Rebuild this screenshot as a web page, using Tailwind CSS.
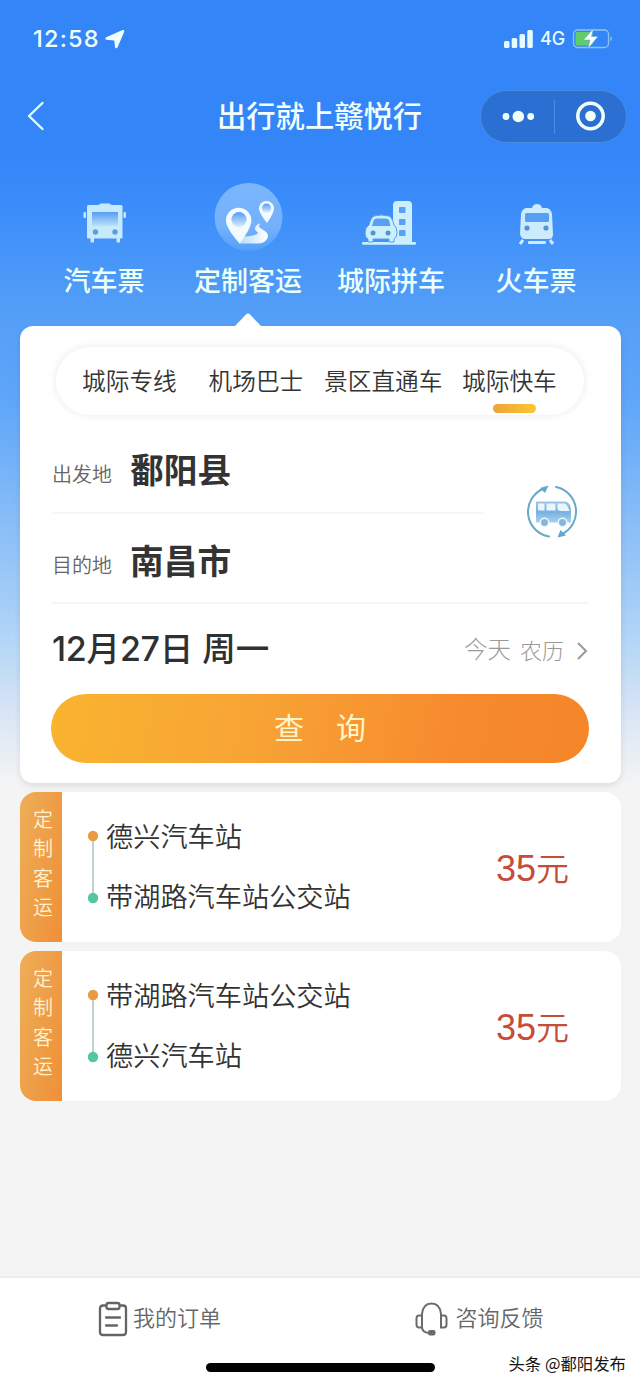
<!DOCTYPE html>
<html lang="zh-CN">
<head>
<meta charset="utf-8">
<title>出行就上赣悦行</title>
<script src="https://cdn.jsdelivr.net/npm/@tailwindcss/browser@4"></script>
</head>
<body class="w-[640px] h-[1386px] overflow-hidden bg-[#f4f4f4] font-['Noto_Sans_CJK_SC',sans-serif] text-[#333]">
<div class="flex h-[1386px] flex-col bg-[linear-gradient(180deg,#3485f7_0px,#3485f7_150px,#3a8cfa_200px,#559ff7_320px,#5fa6f9_400px,#7ab5f8_480px,#a3cdf7_600px,#bcdaf6_660px,#dce7f5_720px,#f4f4f4_785px)]">

  <!-- Status bar -->
  <div class="flex h-[77px] shrink-0 items-center justify-between pl-[33px] pr-[26px]">
    <div class="flex items-center gap-[5px] pt-px text-[#f0fffc]">
      <span class="w-[67px] whitespace-nowrap font-['Inter'] text-[23.500px] font-medium leading-none tracking-[1.200px]">12:58</span>
      <svg class="h-[20px] w-[20px]" viewBox="0 0 20 20" fill="currentColor"><path d="M17.600 1 1.200 8.300Q-.3 9.600 1.300 10.800l8 .7.8 7.100q1.200 1.600 2.400 0L19.200 2.800Q19.600.4 17.600 1Z"/></svg>
    </div>
    <div class="flex items-center text-[#e6fbff]">
      <svg class="h-[18px] w-[29px]" viewBox="0 0 29 18" fill="currentColor"><rect y="11" width="5.500" height="7" rx="1.500"/><rect x="7.700" y="8" width="5.500" height="10" rx="1.500"/><rect x="15.500" y="4" width="5.500" height="14" rx="1.500"/><rect x="23.300" width="5.500" height="18" rx="1.500"/></svg>
      <span class="ml-[7px] w-[26px] pt-px font-['Inter'] text-[18px] font-medium leading-none">4G</span>
      <svg class="ml-[6px] h-[22px] w-[42px]" viewBox="0 0 42 22"><rect x="1.500" y="2" width="35" height="17.500" rx="4" fill="none" stroke="#8bc4ef" stroke-width="1.300"/><rect x="3.500" y="4" width="17" height="13.500" rx="2" fill="#62cd68"/><path d="M38.500 8q3 2.500 0 5.500Z" fill="#8bc4ef"/><path d="M21.500 .5 11.500 12h6.500L16 20.500 26 8.500h-6.500Z" fill="#fff" stroke="#62a9d5" stroke-width=".6"/></svg>
    </div>
  </div>

  <!-- Navigation bar -->
  <div class="flex h-[78px] shrink-0 items-center pl-[26px] pr-[13px]">
    <svg class="h-[30px] w-[20px]" viewBox="0 0 20 30" fill="none" stroke="#dcfffa" stroke-width="2.400" stroke-linecap="round" stroke-linejoin="round"><path d="M16.500 2 3 15l13.500 13"/></svg>
    <h1 class="ml-[171px] w-[205px] whitespace-nowrap pb-[2px] text-[29.300px] font-medium leading-none text-[#f3fffa]">出行就上赣悦行</h1>
    <div class="ml-auto flex h-[53px] w-[147px] items-center rounded-full border border-[#4a8de3] bg-[#2a6fd1]">
      <svg class="h-[51px] w-full" viewBox="0 0 145 51" fill="#f0fffc"><circle cx="25" cy="25.500" r="3.400"/><circle cx="37.300" cy="25.500" r="5.800"/><circle cx="49.700" cy="25.500" r="3.400"/><path d="M73.500 9v34" stroke="#4b8ce2" stroke-width="1.200"/><circle cx="109.500" cy="25" r="12.700" fill="none" stroke="#f0fffc" stroke-width="3.500"/><circle cx="109.500" cy="25" r="5.300"/></svg>
    </div>
  </div>

  <!-- Service menu -->
  <div class="grid h-[171px] shrink-0 grid-cols-4 px-8 pt-[25px] text-[27px] font-medium leading-[40px] text-[#edfff9]">
    <div class="flex flex-col items-center">
      <svg class="h-[80px] w-[80px]" viewBox="0 0 80 80" fill="#c6eafb">
        <defs><linearGradient id="win" x1="0" y1="0" x2="0" y2="1"><stop offset="0" stop-color="#579ef1"/><stop offset="1" stop-color="#badffa"/></linearGradient></defs>
        <path d="M35 25q0-1.500 2-1.500h8q2 0 2 1.500h10q1.500 0 1.500 1.500v31q0 1-1 1h-1.500v4H52.500v-4H30v4h-3.500v-4H24q-1 0-1-1v-31q0-1.500 1.500-1.500Z"/><rect x="19.500" y="32" width="2.500" height="6" rx="1"/><rect x="59.500" y="32" width="2.500" height="6" rx="1"/>
        <rect x="28" y="32" width="26" height="14" fill="url(#win)"/><circle cx="31.500" cy="52" r="2.700" fill="#5a9dda"/><circle cx="51" cy="52" r="2.700" fill="#5a9dda"/>
      </svg>
      <span>汽车票</span>
    </div>
    <div class="flex flex-col items-center">
      <svg class="h-[80px] w-[80px]" viewBox="0 0 80 80">
        <defs><linearGradient id="disc" x1="0" y1="0" x2="0" y2="1"><stop offset="0" stop-color="#7bb6fb"/><stop offset=".65" stop-color="#73b1fb"/><stop offset="1" stop-color="#559efa"/></linearGradient><linearGradient id="pin" x1="0" y1="0" x2="0" y2="1"><stop offset="0" stop-color="#549cf4"/><stop offset="1" stop-color="#dcedff"/></linearGradient><linearGradient id="road" x1="0" y1="0" x2="1" y2="0"><stop offset="0" stop-color="#b4dcff"/><stop offset="1" stop-color="#fff"/></linearGradient></defs>
        <circle cx="40.500" cy="37" r="34" fill="url(#disc)"/>
        <path d="M31 63.500 36 56.500Q46 56 49 54q2-1-1-3-3-4 3-7.500 1.500 0 .5 1.500-2 2 3 4.500 7 3.500 5 8.500-2 5-9 5.500Z" fill="url(#road)"/>
        <path d="M31.500 63.500Q18 48 18 40.500a12.700 12.700 0 0 1 25.400 0Q43.400 48 31.500 63.500Z" fill="#f4fbff"/><circle cx="31" cy="39.500" r="7.600" fill="url(#pin)"/>
        <path d="M59 43Q51 33 51 28.500a7.500 7.500 0 0 1 15 0Q66 33 59 43Z" fill="#f4fbff"/><circle cx="58.500" cy="28" r="4.600" fill="url(#pin)"/>
      </svg>
      <span>定制客运</span>
    </div>
    <div class="flex flex-col items-center">
      <svg class="h-[80px] w-[80px]" viewBox="0 0 80 80" fill="#cceffc">
        <path d="M41 62V25q0-4 4-4h11q4 0 4 4v37Z"/><rect x="10" y="62" width="54" height="2.800" rx="1.200"/>
        <g fill="#5aa1f4"><rect x="47" y="27" width="6.500" height="6" rx=".8"/><rect x="47" y="39" width="6.500" height="6" rx=".8"/><rect x="47" y="50" width="6.500" height="6" rx=".8"/></g>
        <path d="M17 45q2-8 5-9 7-2 15 0 3 1 5 9 3 2 3 8 0 5-3 6v3h-5v-3H21v3h-5v-3q-3-1-3-6 0-6 4-8Z" fill="#cceffc" stroke="#539ff6" stroke-width="1"/>
        <path d="M20 46l1.700-6q1-1.500 3-1.500H34q2 0 3 1.500l1.500 6Z" fill="#599ff3"/><circle cx="21" cy="53" r="2.500" fill="#5193d9"/><circle cx="36" cy="53" r="2.500" fill="#5193d9"/>
      </svg>
      <span class="-ml-[2px]">城际拼车</span>
    </div>
    <div class="flex flex-col items-center">
      <svg class="h-[80px] w-[80px]" viewBox="0 0 80 80" fill="#ccebfd">
        <path d="M36 28q1-4 5-4t5 4h5q4 1 5 6l1 20q0 5-4 5H29q-4 0-5-5l1-20q1-5 5-6Z"/><rect x="29" y="33" width="24" height="9" rx="1.500" fill="#569ff7"/><circle cx="31" cy="48" r="2.600" fill="#5193d9"/><circle cx="50" cy="48" r="2.600" fill="#5193d9"/>
        <path d="m27 60-3 4M54 60l3 4" stroke="#ccebfd" stroke-width="3"/><rect x="32" y="61" width="18" height="3" rx="1"/>
      </svg>
      <span>火车票</span>
    </div>
  </div>

  <!-- Search card -->
  <div class="relative mx-5 h-[457px] w-[601px] shrink-0 rounded-[13px] bg-white px-8 pt-[21px] shadow-[0_3px_7px_rgba(0,0,0,0.09)]">
    <svg class="absolute left-[214px] -top-[13px] h-[14px] w-[28px]" viewBox="0 0 28 14" fill="#fff"><path d="M0 14 12 1.500q2-2 4 0L28 14Z"/></svg>
    <div class="relative ml-[4px] flex h-[68px] w-[528px] items-center whitespace-nowrap rounded-full bg-white pl-[26px] text-[23.700px] font-[350] leading-none shadow-[0_0_9px_rgba(0,0,0,0.09)]">
      <span class="w-[126.500px]">城际专线</span><span class="w-[115.500px]">机场巴士</span><span class="w-[138px]">景区直通车</span><span>城际快车</span>
      <i class="absolute left-[437px] top-[57px] h-[9px] w-[43px] rounded-full bg-gradient-to-r from-[#f0a23a] to-[#f9c62f]"></i>
    </div>
    <div class="flex h-[187px] items-center justify-between">
      <div class="w-[432px]">
        <div class="flex h-[99px] items-center border-b-2 border-[#f6f6f6] pt-[10px]">
          <span class="w-[78px] pt-[11px] text-[20px] font-[350] leading-none text-[#666]">出发地</span><b class="text-[33.700px] font-bold leading-none">鄱阳县</b>
        </div>
        <div class="flex h-[88px] items-center pt-[3px]">
          <span class="w-[78px] pt-[10px] text-[20px] font-[350] leading-none text-[#666]">目的地</span><b class="text-[33.700px] font-bold leading-none">南昌市</b>
        </div>
      </div>
      <svg class="mr-[8px] mt-[7px] h-[56px] w-[56px]" viewBox="0 0 56 56">
        <defs><linearGradient id="van" x1="0" y1="0" x2="0" y2="1"><stop offset="0" stop-color="#9ec5e7"/><stop offset=".5" stop-color="#78b0e0"/><stop offset="1" stop-color="#a8d3f2"/></linearGradient></defs>
        <g fill="none" stroke="#6ba7c8" stroke-width="2" stroke-linecap="round"><path d="M24 52.500A25 25 0 0 1 19 4.500"/><path d="M31 3A25 25 0 0 1 37 50"/></g>
        <path d="m15 4 8.500-2.500L20 9ZM35.500 46l-3 7.500 8.500-2Z" fill="#64a6cc"/>
        <path d="M11 17.500h30q5 2 5 9v12H11Z" fill="url(#van)"/><path d="M13 19.500H19.500v7H13ZM21.500 19.500h9v7h-9ZM32.500 19.500h7.500q3 2 4.500 7.500H36q-3.500 0-3.500-3Z" fill="#eaf5fc"/>
        <g fill="#83b6de" stroke="#edf7fc" stroke-width="1.500"><circle cx="19.500" cy="38.500" r="4.200"/><circle cx="37.500" cy="38.500" r="4.200"/></g>
      </svg>
    </div>
    <div class="flex h-[92px] items-center border-t-2 border-[#f6f6f6] leading-none">
      <span class="whitespace-nowrap pb-[3px] text-[33.500px] font-medium text-[#303030]"><span class="font-['Inter'] text-[34px] tracking-[-0.300px]">12</span>月<span class="font-['Inter'] text-[34px] tracking-[-0.300px]">27</span>日<span class="ml-[9px]">周一</span></span>
      <span class="ml-auto text-[23.500px] font-light text-[#999]">今天</span><span class="ml-[9px] text-[22px] font-light text-[#999]">农历</span>
      <svg class="ml-[11px] mt-[3px] h-[20px] w-[14px]" viewBox="0 0 14 20" fill="none" stroke="#999" stroke-width="2"><path d="m3 2 8 8-8 8"/></svg>
    </div>
    <button class="-ml-px flex h-[69px] w-[538px] items-center justify-center gap-[32px] rounded-full bg-[linear-gradient(100deg,#fab42f_0%,#f8a535_35%,#f78a2e_75%,#f58529_100%)] pb-[5px] text-[30px] font-normal leading-none text-[#fff5c8]"><span>查</span><span>询</span></button>
  </div>

  <!-- Route list -->
  <div class="mx-5 mt-[9px] flex w-[601px] flex-col gap-[9px]">
    <div class="flex h-[150px] overflow-hidden rounded-[16px] bg-white">
      <div class="flex w-[42px] flex-col items-center bg-[linear-gradient(100deg,#eeae58,#ee9038)] pl-[4px] pt-[12px] text-[20px] font-[350] leading-[29.300px] text-[#fff2d2]"><span>定</span><span>制</span><span>客</span><span>运</span></div>
      <div class="flex flex-1 items-center">
        <svg class="ml-[25px] h-[74px] w-[12px]" viewBox="0 0 12 74"><path d="M6 6v62" stroke="#b6cbc3" stroke-width="1.700"/><circle cx="6" cy="6" r="5.200" fill="#e89b45"/><circle cx="6" cy="68" r="5.200" fill="#54c6a0"/></svg>
        <div class="ml-[7px] flex flex-col pb-[4px] text-[27.200px] font-[350] leading-[60px]"><span>德兴汽车站</span><span>带湖路汽车站公交站</span></div>
        <span class="ml-auto mr-[52px] flex items-center leading-none text-[#c64c37]"><span class="pt-[4px] font-['Liberation_Sans'] text-[36px]">35</span><span class="text-[33px] font-[350]">元</span></span>
      </div>
    </div>
    <div class="flex h-[150px] overflow-hidden rounded-[16px] bg-white">
      <div class="flex w-[42px] flex-col items-center bg-[linear-gradient(100deg,#eeae58,#ee9038)] pl-[4px] pt-[12px] text-[20px] font-[350] leading-[29.300px] text-[#fff2d2]"><span>定</span><span>制</span><span>客</span><span>运</span></div>
      <div class="flex flex-1 items-center">
        <svg class="ml-[25px] h-[74px] w-[12px]" viewBox="0 0 12 74"><path d="M6 6v62" stroke="#b6cbc3" stroke-width="1.700"/><circle cx="6" cy="6" r="5.200" fill="#e89b45"/><circle cx="6" cy="68" r="5.200" fill="#54c6a0"/></svg>
        <div class="ml-[7px] flex flex-col pb-[4px] text-[27.200px] font-[350] leading-[60px]"><span>带湖路汽车站公交站</span><span>德兴汽车站</span></div>
        <span class="ml-auto mr-[52px] flex items-center leading-none text-[#c64c37]"><span class="pt-[4px] font-['Liberation_Sans'] text-[36px]">35</span><span class="text-[33px] font-[350]">元</span></span>
      </div>
    </div>
  </div>

  <!-- Bottom tabs -->
  <div class="relative mt-auto h-[110px] shrink-0 border-t-2 border-[#ededed] bg-white">
    <div class="grid h-[82px] grid-cols-2 text-[22px] font-[350] leading-none text-[#666]">
      <div class="flex items-center justify-center gap-[5px] pr-px">
        <svg class="h-[36px] w-[30px]" viewBox="0 0 30 36" fill="none" stroke="#646464" stroke-width="2.300" stroke-linecap="round" stroke-linejoin="round"><path d="M8 4.500H5q-3 0-3 3V31q0 3 3 3h20q3 0 3-3V7.500q0-3-3-3h-3"/><rect x="8.500" y="2" width="13" height="6" rx="2"/><path d="M8 16.500h14M8 24.500h11"/></svg>
        <span class="pb-[6px]">我的订单</span>
      </div>
      <div class="flex items-center justify-center gap-[7px] pr-px">
        <svg class="h-[36px] w-[33px]" viewBox="0 0 33 36" fill="none" stroke="#6b6b6b" stroke-width="2"><path d="M7 15V13Q8 2.500 16.500 2.500T26 13v2M7 26q0 6 8 6"/><path d="M7 14.500H4q-2.500 0-2.500 3v6q0 3 2.500 3h3ZM26 14.500h3q2.500 0 2.500 3v6q0 3-2.500 3h-3Z"/><rect x="14" y="30" width="5.500" height="3.500" rx="1" fill="#6b6b6b"/></svg>
        <span class="pb-[6px]">咨询反馈</span>
      </div>
    </div>
    <i class="absolute left-[206px] top-[85px] h-[9px] w-[229px] rounded-full bg-black"></i>
    <span class="absolute right-[14px] top-[75px] whitespace-nowrap text-[16.400px] leading-[20px] text-[#151515]">头条 @鄱阳发布</span>
  </div>
</div>
</body>
</html>
